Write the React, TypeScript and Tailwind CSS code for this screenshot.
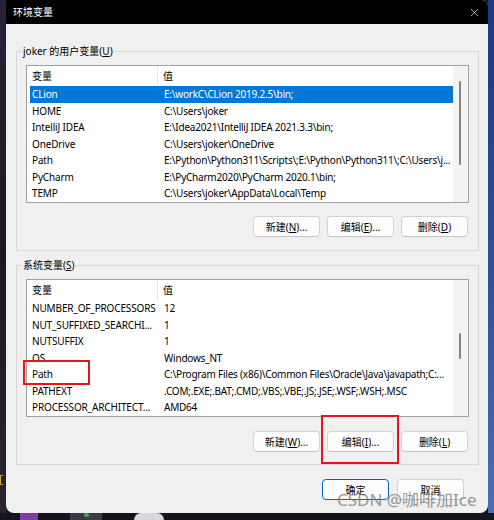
import { X } from 'lucide-react';

const font = "font-['Noto_Sans','Noto_Sans_CJK_SC',sans-serif]";

const userVars: [string, string][] = [
  ['CLion', 'E:\\workC\\CLion 2019.2.5\\bin;'],
  ['HOME', 'C:\\Users\\joker'],
  ['IntelliJ IDEA', 'E:\\Idea2021\\IntelliJ IDEA 2021.3.3\\bin;'],
  ['OneDrive', 'C:\\Users\\joker\\OneDrive'],
  ['Path', 'E:\\Python\\Python311\\Scripts\\;E:\\Python\\Python311\\;C:\\Users\\j...'],
  ['PyCharm', 'E:\\PyCharm2020\\PyCharm 2020.1\\bin;'],
  ['TEMP', 'C:\\Users\\joker\\AppData\\Local\\Temp'],
];

const sysVars: [string, string][] = [
  ['NUMBER_OF_PROCESSORS', '12'],
  ['NUT_SUFFIXED_SEARCHI...', '1'],
  ['NUTSUFFIX', '1'],
  ['OS', 'Windows_NT'],
  ['Path', 'C:\\Program Files (x86)\\Common Files\\Oracle\\Java\\javapath;C:...'],
  ['PATHEXT', '.COM;.EXE;.BAT;.CMD;.VBS;.VBE;.JS;.JSE;.WSF;.WSH;.MSC'],
  ['PROCESSOR_ARCHITECT...', 'AMD64'],
];

function VarList({ rows, selected, thumbTop, thumbHeight }: { rows: [string, string][]; selected?: number; thumbTop: number; thumbHeight: number }) {
  return (
    <div className="mx-[9px] h-[138px] border border-[#a0a0a0] bg-white flex overflow-hidden">
      <div className="flex-1 min-w-0 flex flex-col">
        <div className="h-[20px] flex items-center shrink-0">
          <div className="w-[131px] pl-[5px] h-full flex items-center border-r border-[#e5e5e5]">变量</div>
          <div className="pl-[5px]">值</div>
        </div>
        {rows.map(([k, v], i) => (
          <div
            key={k + i}
            className={`ml-[3px] h-[16.5px] flex items-center shrink-0 leading-[16px] ${i === selected ? 'bg-[#0078d7] text-white' : 'text-black'}`}
          >
            <div className="w-[129px] pl-[2px] pr-[1px] truncate tracking-[-0.15px]">{k}</div>
            <div className="flex-1 min-w-0 pl-[5px] pr-[1px] truncate tracking-[-0.22px]">{v}</div>
          </div>
        ))}
      </div>
      <div className="w-[15px] shrink-0 bg-[#f3f3f3] relative">
        <div className="absolute left-[6px] w-[2px] rounded-full bg-[#858585]" style={{ top: thumbTop, height: thumbHeight }} />
      </div>
    </div>
  );
}

function Btn({ children, primary }: { children: React.ReactNode; primary?: boolean }) {
  return (
    <button
      className={`w-[67px] h-[21px] rounded-[4px] bg-[#fdfdfd] border text-[10px] text-black flex items-center justify-center ${primary ? 'border-[#0067c0]' : 'border-[#d3d3d3] border-b-[#c2c2c2]'}`}
    >
      {children}
    </button>
  );
}

export default function App() {
  return (
    <div className={`relative w-[494px] h-[520px] bg-[#17131d] flex flex-col overflow-hidden text-[10px] leading-none ${font}`}>
      <div className="flex h-[513px]">
        <div className="w-[6px] bg-gradient-to-b from-[#2a2233] via-[#1d1824] to-[#2b2530] flex flex-col justify-end pb-[28px]">
          <div className="h-[10px] w-[3px] border border-[#d0a040] border-r-0" />
        </div>
        <div className="w-[482px] flex flex-col bg-[#f0f0f0] rounded-b-[8px] rounded-tr-[6px] overflow-hidden">
          <div className="h-[24px] bg-black flex items-center justify-between pl-[7px] pr-[7px] text-white shrink-0">
            <span className="text-[10px]">环境变量</span>
            <X className="w-[13px] h-[13px]" strokeWidth={1.3} color="#e8e8e8" />
          </div>

          <fieldset className="min-w-0 mt-[19px] ml-[10px] mr-[9px] border border-[#d7d7d7] pb-[13px]">
            <legend className="ml-[5px] px-[1px] leading-[16px] h-[16px]">
              joker 的用户变量(<u>U</u>)
            </legend>
            <div className="mt-[6px]">
              <VarList rows={userVars} selected={0} thumbTop={15} thumbHeight={84} />
            </div>
            <div className="mt-[13px] pr-[10px] flex justify-end gap-[7px]">
              <Btn>新建(<u>N</u>)...</Btn>
              <Btn>编辑(<u>E</u>)...</Btn>
              <Btn>删除(<u>D</u>)</Btn>
            </div>
          </fieldset>

          <fieldset className="min-w-0 mt-[6px] ml-[10px] mr-[9px] border border-[#d7d7d7] pb-[12px]">
            <legend className="ml-[5px] px-[1px] leading-[16px] h-[16px]">
              系统变量(<u>S</u>)
            </legend>
            <div className="mt-[6px]">
              <VarList rows={sysVars} thumbTop={53} thumbHeight={26} />
            </div>
            <div className="mt-[14px] pr-[10px] flex justify-end gap-[7px]">
              <Btn>新建(<u>W</u>)...</Btn>
              <Btn>编辑(<u>I</u>)...</Btn>
              <Btn>删除(<u>L</u>)</Btn>
            </div>
          </fieldset>

          <div className="mt-[14px] pr-[24px] flex justify-end gap-[8px]">
            <Btn primary>确定</Btn>
            <Btn>取消</Btn>
          </div>
        </div>
        <div className="flex-1 bg-gradient-to-b from-[#1e3a78] via-[#2d4f95] to-[#4a6fb0]" />
      </div>
      <div className="flex-1 flex items-start gap-[32px] pl-[20px]">
        <div className="w-[18px] h-[7px] bg-[#7b3fa6]" />
        <div className="w-[32px] h-[7px] bg-[#3c3a44] flex justify-center">
          <div className="w-[5px] h-[4px] rounded-full bg-[#3cb043]" />
        </div>
        <div className="w-[30px] h-[7px] rounded-t-full bg-[#d8d8dc]" />
      </div>

      <div className="absolute left-[23px] top-[360px] w-[67px] h-[25px] border-2 border-[#e8141c]" />
      <div className="absolute left-[321px] top-[415px] w-[78px] h-[49px] border-2 border-[#e8141c]" />
      <div className="absolute left-[337px] top-[491px] text-[17px] leading-none text-[#7c7c7c]/80 whitespace-nowrap">
        CSDN @咖啡加Ice
      </div>
    </div>
  );
}
